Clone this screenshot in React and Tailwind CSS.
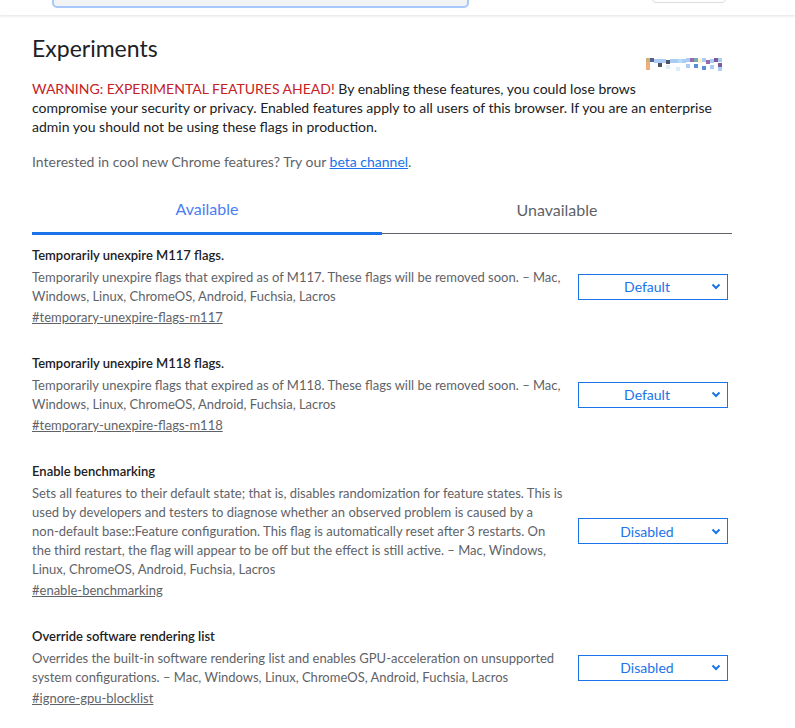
import React from "react";

const font = { fontFamily: "Lato, 'Noto Sans', sans-serif" };

const experiments = [
  {
    title: "Temporarily unexpire M117 flags.",
    lines: [
      "Temporarily unexpire flags that expired as of M117. These flags will be removed soon. – Mac,",
      "Windows, Linux, ChromeOS, Android, Fuchsia, Lacros",
    ],
    link: "#temporary-unexpire-flags-m117",
    value: "Default",
  },
  {
    title: "Temporarily unexpire M118 flags.",
    lines: [
      "Temporarily unexpire flags that expired as of M118. These flags will be removed soon. – Mac,",
      "Windows, Linux, ChromeOS, Android, Fuchsia, Lacros",
    ],
    link: "#temporary-unexpire-flags-m118",
    value: "Default",
  },
  {
    title: "Enable benchmarking",
    lines: [
      "Sets all features to their default state; that is, disables randomization for feature states. This is",
      "used by developers and testers to diagnose whether an observed problem is caused by a",
      "non-default base::Feature configuration. This flag is automatically reset after 3 restarts. On",
      "the third restart, the flag will appear to be off but the effect is still active. – Mac, Windows,",
      "Linux, ChromeOS, Android, Fuchsia, Lacros",
    ],
    link: "#enable-benchmarking",
    value: "Disabled",
  },
  {
    title: "Override software rendering list",
    lines: [
      "Overrides the built-in software rendering list and enables GPU-acceleration on unsupported",
      "system configurations. – Mac, Windows, Linux, ChromeOS, Android, Fuchsia, Lacros",
    ],
    link: "#ignore-gpu-blocklist",
    value: "Disabled",
  },
];

// pixelated version string, drawn as blocks
const pixels = [
  [0, 0, "#c8b27a"], [4, 0, "#5a5f8f"], [8, 1, "#a9cdf7"], [12, 1, "#a9cdf7"], [16, 1, "#a9cdf7"],
  [20, 2, "#4e5563"], [24, 1, "#a9cdf7"], [28, 1, "#a9cdf7"], [32, 1, "#b9dcf9"], [36, 1, "#a9cdf7"],
  [40, 0, "#a9cdf7"], [44, 0, "#9b6aa4"], [48, 0, "#78a9b0"], [52, 1, "#fff3c0"], [56, 0, "#a9cdf7"],
  [60, 2, "#9b6aa4"], [64, 1, "#a9cdf7"], [68, 0, "#7c5b98"], [72, 0, "#a9cdf7"], [0, 4, "#eeb07b"],
  [0, 8, "#eeb07b"], [12, 5, "#4e5563"], [20, 7, "#d8eefc"], [30, 9, "#d8eefc"], [48, 6, "#5b8ed8"],
  [56, 8, "#5b8ed8"], [64, 7, "#a9cdf7"], [72, 5, "#7c5b98"], [72, 9, "#a9cdf7"], [40, 6, "#a9cdf7"],
];

function Select({ value }) {
  return (
    <div className="flex h-[26px] w-[150px] shrink-0 items-center border border-[#1a73e8] text-[14px] text-[#1a73e8]">
      <span className="flex-1 text-center pl-1">{value}</span>
      <svg width="10" height="7" viewBox="0 0 10 7" className="mr-[6px]">
        <path d="M1.5 1.5 L5 5 L8.5 1.5" fill="none" stroke="#1a73e8" strokeWidth="2" />
      </svg>
    </div>
  );
}

export default function App() {
  return (
    <div className="min-h-screen bg-white" style={font}>
      {/* header strip */}
      <div className="relative h-[15px] bg-white shadow-[0_1px_3px_rgba(0,0,0,0.12)]">
        <div className="absolute left-[52px] top-[-10px] h-[18px] w-[417px] rounded-b-[5px] border-2 border-[#a8c7fa] bg-[#f1f3f4]" />
        <div className="absolute left-[652px] top-[-10px] h-[13px] w-[74px] rounded-b-[4px] border border-[#dadce0] bg-white" />
      </div>

      <div className="w-[700px] ml-[32px] pt-[18px]">
        <div className="flex items-start justify-between">
          <h1 className="text-[23px] leading-[30px] text-[#202124]">Experiments</h1>
          <svg width="82" height="14" className="mt-[25px] mr-[4px]">
            {pixels.map(([x, y, c], i) => (
              <rect key={i} x={x} y={y} width="4" height="4" fill={c} />
            ))}
          </svg>
        </div>

        <div className="mt-[7px] text-[14px] leading-[19px] text-[#202124]">
          <div className="whitespace-nowrap">
            <span className="text-[#c5221f]">WARNING: EXPERIMENTAL FEATURES AHEAD!</span> By enabling these features, you could lose brows
          </div>
          <div className="whitespace-nowrap">compromise your security or privacy. Enabled features apply to all users of this browser. If you are an enterprise</div>
          <div className="whitespace-nowrap">admin you should not be using these flags in production.</div>
        </div>

        <p className="mt-[16px] text-[14px] leading-[19px] text-[#5f6368]">
          Interested in cool new Chrome features? Try our <span className="text-[#1a73e8] underline">beta channel</span>.
        </p>

        <div className="mt-[18px] flex">
          <div className="flex h-[46px] flex-1 items-center justify-center border-b-[3px] border-[#1a73e8] text-[16px] text-[#4a7ef5]">
            <span className="-mt-[4px]">Available</span>
          </div>
          <div className="flex h-[46px] flex-1 items-start justify-center">
            <div className="flex h-[45px] w-full items-center justify-center border-b border-[#5f6368] text-[16px] text-[#5f6368]">
              <span className="-mt-[2px]">Unavailable</span>
            </div>
          </div>
        </div>

        <div className="mt-[11px] flex flex-col gap-[27px]">
          {experiments.map((e) => (
            <div key={e.link} className="flex items-center justify-between">
              <div className="w-[540px] text-[13px] leading-[19px]">
                <div className="font-semibold text-[#202124]">{e.title}</div>
                <div className="mt-[3px] text-[#5f6368]">
                  {e.lines.map((l) => (
                    <div key={l} className="whitespace-nowrap">{l}</div>
                  ))}
                </div>
                <div className="mt-[2px] text-[#5f6368] underline">{e.link}</div>
              </div>
              <div className="mr-[4px]">
                <Select value={e.value} />
              </div>
            </div>
          ))}
        </div>
      </div>
    </div>
  );
}
